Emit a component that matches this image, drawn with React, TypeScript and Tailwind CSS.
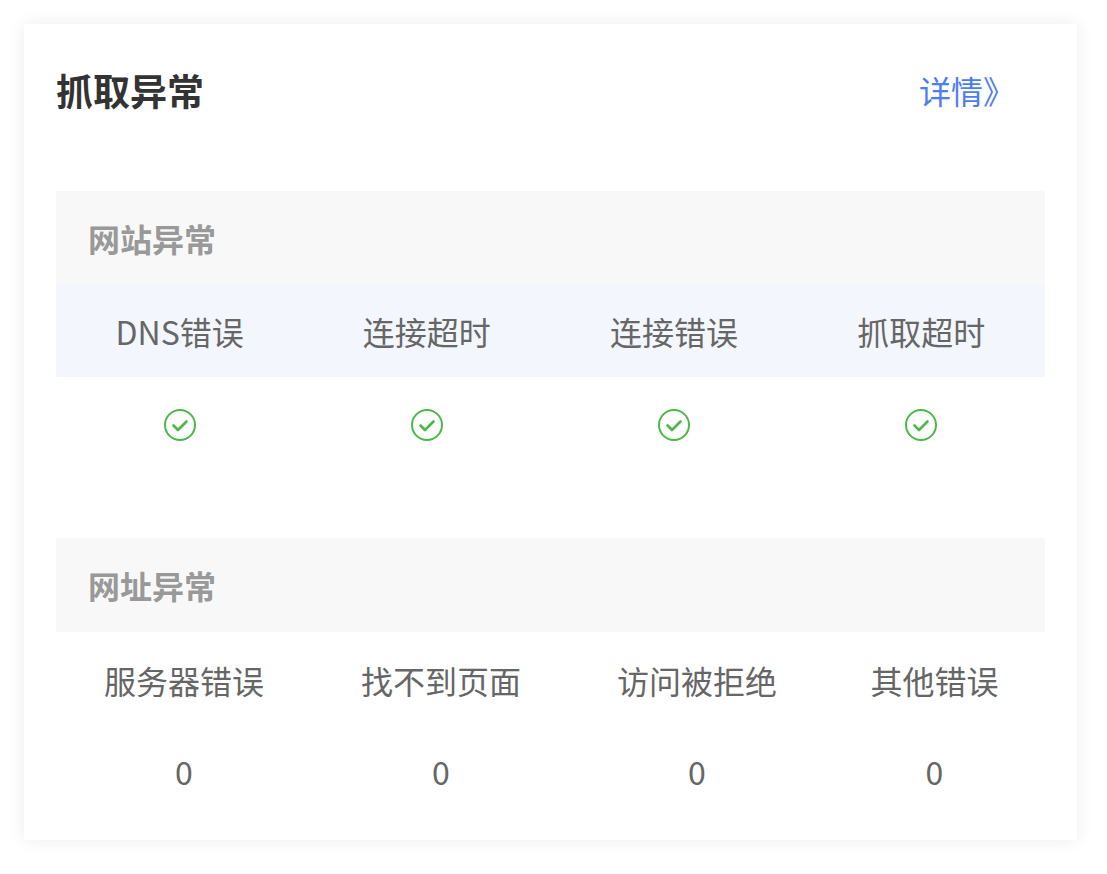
import React from "react";

const Check = () => (
  <svg width="34" height="34" viewBox="0 0 34 34" fill="none">
    <circle cx="17" cy="17" r="15" stroke="#4cb848" strokeWidth="2" />
    <path d="M10.5 17.5l4.5 4.5 8.5-8.5" stroke="#4cb848" strokeWidth="2.6" strokeLinecap="round" strokeLinejoin="round" />
  </svg>
);

export default function App() {
  const f = { fontFamily: '"Noto Sans CJK SC", "Noto Sans", sans-serif' };
  const cols1 = ["DNS错误", "连接超时", "连接错误", "抓取超时"];
  const cols2 = ["服务器错误", "找不到页面", "访问被拒绝", "其他错误"];
  return (
    <div style={f} className="w-[1107px] h-[874px] bg-white pt-[24px] pl-[24px]">
      <div className="w-[1053px] h-[816px] bg-white shadow-[0_0_16px_rgba(0,0,0,0.08)] px-[32px] pt-[36px]">
        <div className="flex items-center justify-between h-[60px]">
          <div className="text-[37px] font-bold text-[#333] leading-none">抓取异常</div>
          <div className="text-[32px] text-[#4d7cf6] leading-none mr-[30px]">详情》</div>
        </div>
        <div className="mt-[71px] h-[94px] bg-[#f8f8f8] flex items-center pl-[32px] text-[32px] font-bold text-[#999]">网站异常</div>
        <div className="grid grid-cols-4 h-[92px] bg-[#f3f6fd] text-[32px] text-[#666] items-center text-center">
          {cols1.map((c) => <div key={c}>{c}</div>)}
        </div>
        <div className="grid grid-cols-4 h-[96px] items-center justify-items-center">
          {cols1.map((c) => <Check key={c} />)}
        </div>
        <div className="mt-[65px] h-[94px] bg-[#f8f8f8] flex items-center pl-[32px] text-[32px] font-bold text-[#999]">网址异常</div>
        <div className="grid grid-cols-[256px_258px_254px_221px] h-[96px] text-[32px] text-[#666] items-center text-center">
          {cols2.map((c) => <div key={c}>{c}</div>)}
        </div>
        <div className="grid grid-cols-[256px_258px_254px_221px] h-[86px] text-[32px] text-[#666] items-center text-center">
          {cols2.map((c) => <div key={c}>0</div>)}
        </div>
      </div>
    </div>
  );
}
